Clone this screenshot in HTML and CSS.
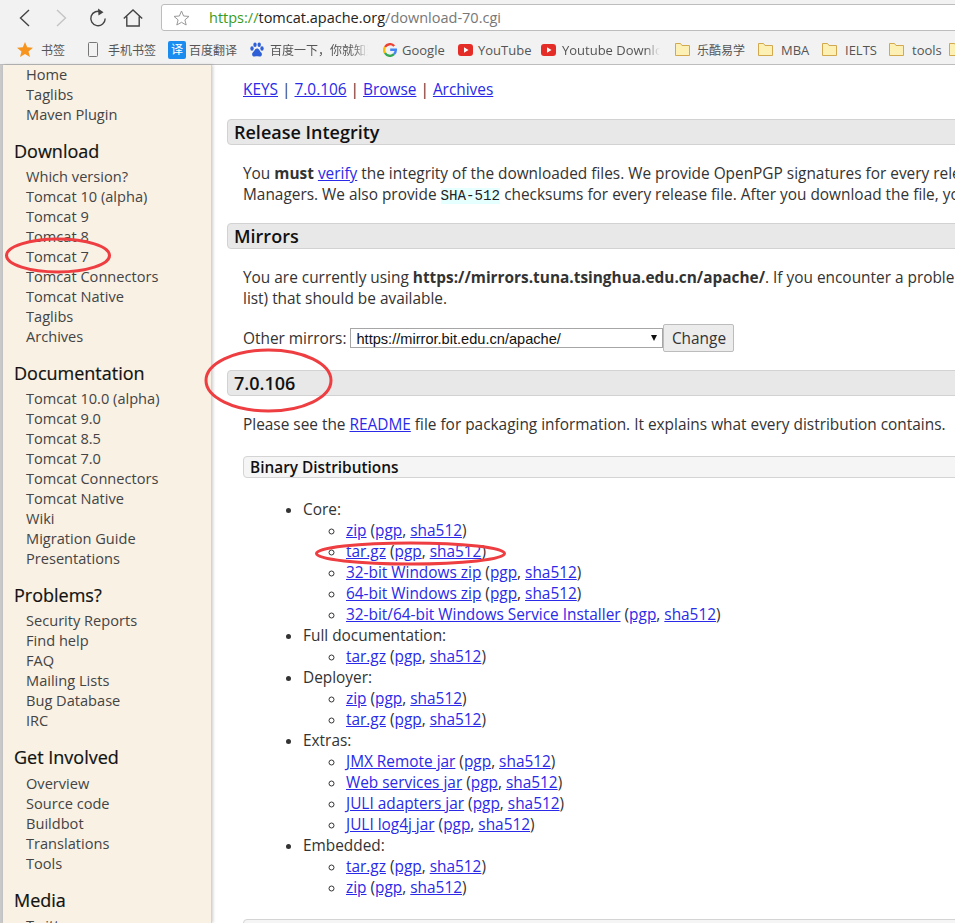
FILE: index.html
```html
<!DOCTYPE html>
<html lang="en">
<head>
  <meta charset="UTF-8" />
  <title>Apache Tomcat 7 Downloads</title>
  <link rel="stylesheet" href="styles.css">
</head>
<body>
  <!-- Browser toolbar -->
  <div class="toolbar">
    <svg class="nav-icon back" width="11" height="20" viewBox="0 0 11 20"><path d="M10 2 L1.500 10 L10 18" /></svg>
    <svg class="nav-icon forward" width="11" height="20" viewBox="0 0 11 20"><path d="M1 2 L9.500 10 L1 18" /></svg>
    <svg class="nav-icon reload" width="18" height="20" viewBox="0 0 18 20"><path d="M12.500 4.200 A7.200 7.200 0 1 0 16.200 10.500" /><path class="solid" d="M9 0.500 L14.500 4.300 L9.500 7.500 Z" /></svg>
    <svg class="nav-icon home" width="20" height="18" viewBox="0 0 20 18"><path d="M0.800 9.500 L10 1 L19.200 9.500 M3.800 7.500 V17 H16.200 V7.500" /></svg>
    <div class="address">
      <svg class="star-icon" width="17" height="16" viewBox="0 0 17 16"><path d="M8.500 1 L10.600 6 L16 6.400 L11.900 9.900 L13.200 15 L8.500 12.300 L3.800 15 L5.100 9.900 L1 6.400 L6.400 6 Z" /></svg>
      <div class="url"><span class="scheme">https://</span><span class="host">tomcat.apache.org</span>/download-70.cgi</div>
    </div>
  </div>

  <!-- Bookmarks bar -->
  <div class="bookmarks">
    <div class="bm bm-main">
      <svg width="16" height="15" viewBox="0 0 16 15"><path fill="#f7941d" d="M8 0 L10.200 5.300 L16 5.700 L11.500 9.400 L13 15 L8 12 L3 15 L4.500 9.400 L0 5.700 L5.800 5.300 Z" /></svg>
      <span class="cjk">书签</span>
    </div>
    <div class="bm-sep"></div>
    <div class="bm bm-mobile">
      <svg width="10" height="15" viewBox="0 0 10 15"><rect x="0.500" y="0.500" width="9" height="14" rx="1" fill="none" stroke="#777" /></svg>
      <span class="cjk">手机书签</span>
    </div>
    <div class="bm bm-fanyi">
      <div class="fanyi-icon">译</div>
      <span class="cjk">百度翻译</span>
    </div>
    <div class="bm bm-baidu">
      <svg width="16" height="16" viewBox="0 0 16 16" fill="#2f5fd6"><ellipse cx="3" cy="6.500" rx="1.700" ry="2.200" /><ellipse cx="6" cy="2.800" rx="1.700" ry="2.300" /><ellipse cx="10.200" cy="2.800" rx="1.700" ry="2.300" /><ellipse cx="13" cy="6.500" rx="1.700" ry="2.200" /><path d="M8 6.500 C5.800 6.500 5.500 9 3.800 10.500 C2.200 12 3.500 15 6 14.500 C7.200 14.200 8.800 14.200 10 14.500 C12.500 15 13.800 12 12.200 10.500 C10.500 9 10.200 6.500 8 6.500 Z" /></svg>
      <span class="cjk fade">百度一下，你就知道</span>
    </div>
    <div class="bm bm-google">
      <svg width="14" height="14" viewBox="0 0 14 14" fill="none" stroke-width="2.400"><path stroke="#ea4335" d="M11.200 3 A5.800 5.800 0 0 0 2 4" /><path stroke="#fbbc05" d="M2 4 A5.800 5.800 0 0 0 2 10" /><path stroke="#34a853" d="M2 10 A5.800 5.800 0 0 0 11 11.200" /><path stroke="#4285f4" d="M11 11.200 A5.800 5.800 0 0 0 12.800 6.800 H7.200" /></svg>
      <span class="bm-w-google">Google</span>
    </div>
    <div class="bm bm-yt">
      <svg width="15" height="12" viewBox="0 0 15 12"><rect width="15" height="12" rx="3" fill="#e52d27" /><path fill="#fff" d="M6 3.300 L10.500 6 L6 8.700 Z" /></svg>
      <span class="bm-w-yt">YouTube</span>
    </div>
    <div class="bm bm-ytd">
      <svg width="15" height="12" viewBox="0 0 15 12"><rect width="15" height="12" rx="3" fill="#e52d27" /><path fill="#fff" d="M6 3.300 L10.500 6 L6 8.700 Z" /></svg>
      <span class="fade">Youtube Download</span>
    </div>
    <div class="bm bm-folder bm-lekoo">
      <svg width="15" height="13" viewBox="0 0 15 13"><path fill="#fdf0b4" stroke="#d2a94e" d="M0.500 0.500 H5.500 L7 2.500 H14.500 V12.500 H0.500 Z" /></svg>
      <span class="cjk">乐酷易学</span>
    </div>
    <div class="bm bm-folder">
      <svg width="15" height="13" viewBox="0 0 15 13"><path fill="#fdf0b4" stroke="#d2a94e" d="M0.500 0.500 H5.500 L7 2.500 H14.500 V12.500 H0.500 Z" /></svg>
      <span class="bm-w-mba">MBA</span>
    </div>
    <div class="bm bm-folder">
      <svg width="15" height="13" viewBox="0 0 15 13"><path fill="#fdf0b4" stroke="#d2a94e" d="M0.500 0.500 H5.500 L7 2.500 H14.500 V12.500 H0.500 Z" /></svg>
      <span class="bm-w-ielts">IELTS</span>
    </div>
    <div class="bm bm-folder bm-tools">
      <svg width="15" height="13" viewBox="0 0 15 13"><path fill="#fdf0b4" stroke="#d2a94e" d="M0.500 0.500 H5.500 L7 2.500 H14.500 V12.500 H0.500 Z" /></svg>
      <span class="bm-w-tools">tools</span>
    </div>
    <div class="bm bm-folder">
      <svg width="15" height="13" viewBox="0 0 15 13"><path fill="#fdf0b4" stroke="#d2a94e" d="M0.500 0.500 H5.500 L7 2.500 H14.500 V12.500 H0.500 Z" /></svg>
    </div>
  </div>

  <div class="page">
    <!-- Side navigation -->
    <div class="side">
      <ul>
        <li>Home</li>
        <li>Taglibs</li>
        <li>Maven Plugin</li>
      </ul>
      <h2>Download</h2>
      <ul>
        <li>Which version?</li>
        <li>Tomcat 10 (alpha)</li>
        <li>Tomcat 9</li>
        <li>Tomcat 8</li>
        <li>Tomcat 7</li>
        <li>Tomcat Connectors</li>
        <li>Tomcat Native</li>
        <li>Taglibs</li>
        <li>Archives</li>
      </ul>
      <h2>Documentation</h2>
      <ul>
        <li>Tomcat 10.0 (alpha)</li>
        <li>Tomcat 9.0</li>
        <li>Tomcat 8.5</li>
        <li>Tomcat 7.0</li>
        <li>Tomcat Connectors</li>
        <li>Tomcat Native</li>
        <li>Wiki</li>
        <li>Migration Guide</li>
        <li>Presentations</li>
      </ul>
      <h2>Problems?</h2>
      <ul>
        <li>Security Reports</li>
        <li>Find help</li>
        <li>FAQ</li>
        <li>Mailing Lists</li>
        <li>Bug Database</li>
        <li>IRC</li>
      </ul>
      <h2 class="involved">Get Involved</h2>
      <ul>
        <li>Overview</li>
        <li>Source code</li>
        <li>Buildbot</li>
        <li>Translations</li>
        <li>Tools</li>
      </ul>
      <h2>Media</h2>
      <ul>
        <li>Twitter</li>
      </ul>
    </div>

    <!-- Main content -->
    <div class="main">
      <p class="top-links"><a href="#">KEYS</a> | <a href="#">7.0.106</a> | <a href="#">Browse</a> | <a href="#">Archives</a></p>

      <h3>Release Integrity</h3>
      <p>You <b>must</b> <a href="#">verify</a> the integrity of the downloaded files. We provide OpenPGP signatures for every release file. This signature should be matched against the KEYS file which contains the OpenPGP keys of Tomcat's Release<br>Managers. We also provide <code>SHA-512</code> checksums for every release file. After you download the file, you should calculate a checksum for your download, and make sure it is the same as ours.</p>

      <h3>Mirrors</h3>
      <p class="mirror-note">You are currently using <b>https://mirrors.tuna.tsinghua.edu.cn/apache/</b>. If you encounter a problem with this mirror, please select another mirror. If all mirrors are failing, there are backup mirrors (at the end of the mirrors<br>list) that should be available.</p>
      <div class="mirror-row">
        <span>Other mirrors:</span>
        <div class="mirror-select">https://mirror.bit.edu.cn/apache/</div>
        <button class="change-btn">Change</button>
      </div>

      <h3 class="version">7.0.106</h3>
      <p>Please see the <a href="#">README</a> file for packaging information. It explains what every distribution contains.</p>

      <h4>Binary Distributions</h4>
      <ul class="dist">
        <li>Core:
          <ul>
            <li><a href="#">zip</a> (<a href="#">pgp</a>, <a href="#">sha512</a>)</li>
            <li><a href="#">tar.gz</a> (<a href="#">pgp</a>, <a href="#">sha512</a>)</li>
            <li><a href="#">32-bit Windows zip</a> (<a href="#">pgp</a>, <a href="#">sha512</a>)</li>
            <li><a href="#">64-bit Windows zip</a> (<a href="#">pgp</a>, <a href="#">sha512</a>)</li>
            <li><a href="#">32-bit/64-bit Windows Service Installer</a> (<a href="#">pgp</a>, <a href="#">sha512</a>)</li>
          </ul>
        </li>
        <li>Full documentation:
          <ul>
            <li><a href="#">tar.gz</a> (<a href="#">pgp</a>, <a href="#">sha512</a>)</li>
          </ul>
        </li>
        <li>Deployer:
          <ul>
            <li><a href="#">zip</a> (<a href="#">pgp</a>, <a href="#">sha512</a>)</li>
            <li><a href="#">tar.gz</a> (<a href="#">pgp</a>, <a href="#">sha512</a>)</li>
          </ul>
        </li>
        <li>Extras:
          <ul>
            <li><a href="#">JMX Remote jar</a> (<a href="#">pgp</a>, <a href="#">sha512</a>)</li>
            <li><a href="#">Web services jar</a> (<a href="#">pgp</a>, <a href="#">sha512</a>)</li>
            <li><a href="#">JULI adapters jar</a> (<a href="#">pgp</a>, <a href="#">sha512</a>)</li>
            <li><a href="#">JULI log4j jar</a> (<a href="#">pgp</a>, <a href="#">sha512</a>)</li>
          </ul>
        </li>
        <li>Embedded:
          <ul>
            <li><a href="#">tar.gz</a> (<a href="#">pgp</a>, <a href="#">sha512</a>)</li>
            <li><a href="#">zip</a> (<a href="#">pgp</a>, <a href="#">sha512</a>)</li>
          </ul>
        </li>
      </ul>
      <h4></h4>
    </div>
  </div>

  <!-- Red hand-drawn marks over the page -->
  <svg class="marks" width="955" height="923" viewBox="0 0 955 923" fill="none" stroke="#ee3e41" stroke-width="3">
    <ellipse cx="58" cy="255.500" rx="51.500" ry="16.500" />
    <ellipse cx="268.500" cy="380.500" rx="62.500" ry="30.500" />
    <ellipse cx="410.500" cy="553.500" rx="94" ry="10.500" />
  </svg>
</body>
</html>
```

FILE: styles.css
```css
* {
  box-sizing: border-box;
  margin: 0;
  padding: 0;
}

html, body {
  height: 100%;
  overflow: hidden;
}

body {
  position: relative;
  display: flex;
  flex-direction: column;
  font-family: 'Open Sans', 'Noto Sans CJK SC', sans-serif;
  background: #fff;
}

/* Browser chrome */
.toolbar {
  display: flex;
  align-items: center;
  height: 31px;
  padding: 4px 0 0 19px;
  background: #f2f2f2;
  flex-shrink: 0;
}

.nav-icon {
  fill: none;
  stroke: #444;
  stroke-width: 1.4;
  flex-shrink: 0;
}

.nav-icon .solid {
  fill: #444;
  stroke: none;
}

.forward {
  margin-left: 26px;
  stroke: #c4c4c4;
}

.reload {
  margin-left: 22px;
}

.home {
  margin-left: 16px;
}

.address {
  display: flex;
  align-items: center;
  height: 27px;
  width: 900px;
  margin-left: 18px;
  flex-shrink: 0;
  background: #fff;
  border: 1px solid #bdbdbd;
  border-radius: 3px;
}

.star-icon {
  margin-left: 11px;
  fill: none;
  stroke: #999;
}

.url {
  margin-left: 19px;
  font-size: 14.5px;
  color: #777;
  white-space: nowrap;
}

.scheme {
  color: #3a9c1c;
}

.host {
  color: #222;
}

.bookmarks {
  display: flex;
  align-items: center;
  height: 34px;
  padding: 4px 0 0 17px;
  background: #f2f2f2;
  border-bottom: 1px solid #bdbdbd;
  font-size: 13px;
  color: #555;
  white-space: nowrap;
  overflow: hidden;
  flex-shrink: 0;
}

.cjk {
  width: 48px;
  font-size: 12px;
}

.bm {
  display: flex;
  align-items: center;
  flex-shrink: 0;
  gap: 5px;
}

.bm-main {
  gap: 8px;
}

.bm-main .cjk {
  width: 24px;
}

.bm-sep {
  width: 1px;
  height: 16px;
  margin: 0 13px 0 10px;
  background: #d4d4d4;
}

.bm-mobile {
  gap: 10px;
  margin-right: 12px;
}

.fanyi-icon {
  width: 18px;
  height: 18px;
  border-radius: 2px;
  background: #1a8cf0;
  color: #fff;
  font-size: 12px;
  line-height: 18px;
  text-align: center;
}

.bm-fanyi {
  gap: 3px;
  margin-right: 12px;
}

.bm-baidu {
  margin-right: 15px;
}

.fade {
  width: 98px;
  overflow: hidden;
  -webkit-mask-image: linear-gradient(to right, #000 85%, transparent);
  mask-image: linear-gradient(to right, #000 85%, transparent);
}

.bm-google {
  gap: 5px;
  margin-right: 13px;
}

.bm-w-google {
  width: 43px;
}

.bm-yt {
  margin-right: 12px;
}

.bm-w-yt {
  width: 51px;
}

.bm-ytd {
  gap: 6px;
  margin-right: 15px;
}

.bm-folder {
  gap: 8px;
  margin-right: 13px;
}

.bm-lekoo {
  gap: 7px;
}

.bm-tools {
  margin-right: 8px;
}

.bm-w-mba {
  width: 28px;
}

.bm-w-ielts {
  width: 31px;
}

.bm-w-tools {
  width: 29px;
}

/* Page */
.page {
  display: flex;
  flex: 1;
  min-height: 0;
  border-left: 3px solid #c9c9c9;
}

.side {
  width: 209px;
  flex-shrink: 0;
  padding-left: 11px;
  background: #f8f1e4;
  border-right: 1px solid #d8d3c8;
  box-shadow: 1px 0 3px rgba(0, 0, 0, 0.2);
  font-size: 14.6px;
  line-height: 20px;
  color: #444;
  overflow: hidden;
  white-space: nowrap;
}

.side ul {
  list-style: none;
  padding-left: 12px;
}

.side ul:first-child {
  margin-top: -1px;
}

.side h2 {
  margin: 15px 0 3px;
  font-size: 18px;
  font-weight: 400;
  line-height: 24px;
  color: #111;
  -webkit-text-stroke: 0.2px #111;
}

.side h2.involved {
  margin-bottom: 4px;
}

.main {
  flex: 1;
  min-width: 0;
  padding: 14px 0 0 15px;
  font-size: 15.4px;
  line-height: 21px;
  color: #333;
  overflow: hidden;
  white-space: nowrap;
}

.main a {
  color: #2a2ae8;
}

.main p {
  margin: 18px 0 18px 16px;
}

.main p.top-links {
  margin-top: 0;
  margin-bottom: 19px;
}

.main p.mirror-note {
  margin-bottom: 15px;
}

.main h3 {
  width: 900px;
  height: 26px;
  padding-left: 6px;
  background: #e8e8e8;
  border: 1px solid #d2d2d2;
  border-radius: 4px;
  font-size: 18px;
  font-weight: 600;
  line-height: 24px;
  color: #111;
}

.main h3.version {
  margin-top: 18px;
}

.main code {
  background: #e6ffff;
  font-family: 'Liberation Mono', monospace;
  font-size: 14.2px;
  line-height: 1;
  color: #222;
}

.mirror-row {
  display: flex;
  align-items: center;
  height: 28px;
  margin-left: 16px;
  gap: 4px;
}

.mirror-select {
  position: relative;
  width: 313px;
  height: 20px;
  padding: 1px 0 0 5px;
  background: #fff;
  border: 1px solid #a6a6a6;
  font-family: 'Liberation Sans', sans-serif;
  font-size: 14.6px;
  line-height: 18px;
  color: #111;
}

/* the little arrow of the drop-down */
.mirror-select::after {
  content: "";
  position: absolute;
  top: 6px;
  right: 5px;
  border-top: 6px solid #111;
  border-left: 3.5px solid transparent;
  border-right: 3.5px solid transparent;
}

.change-btn {
  width: 71px;
  height: 28px;
  margin-left: -4px;
  background: #ececec;
  border: 1px solid #bcbcbc;
  border-radius: 2px;
  font-family: 'Open Sans', sans-serif;
  font-size: 15.4px;
  color: #333;
}

.main h4 {
  width: 900px;
  height: 22px;
  margin: 21px 0 0 16px;
  padding-left: 6px;
  background: #f5f5f5;
  border: 1px solid #d4d4d4;
  border-radius: 4px;
  font-size: 15.4px;
  font-weight: 600;
  line-height: 21px;
  color: #111;
}

.dist {
  margin: 21px 0 0 76px;
  padding: 0;
}

.dist ul {
  padding-left: 43px;
  list-style: circle;
}

/* Red marks sit over the whole window */
.marks {
  position: absolute;
  top: 0;
  left: 0;
  pointer-events: none;
}
```
